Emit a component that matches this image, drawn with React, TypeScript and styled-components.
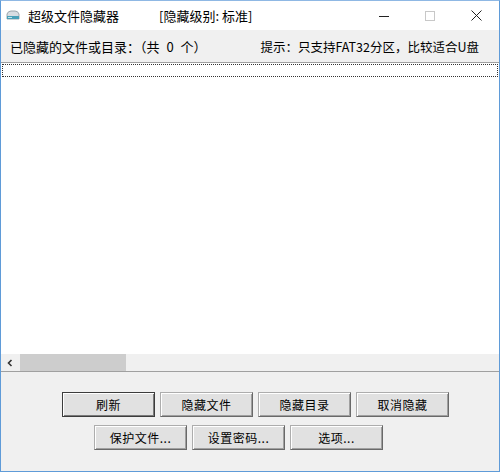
import styled, { createGlobalStyle } from 'styled-components';

const GlobalStyles = createGlobalStyle`
  * {
    box-sizing: border-box;
    margin: 0;
    padding: 0;
  }

  body {
    font-family: 'Noto Sans CJK SC', 'Noto Sans', sans-serif;
    font-size: 12px;
    color: #000;
    background: #fff;
  }
`;

const Window = styled.div`
  width: 500px;
  height: 472px;
  display: flex;
  flex-direction: column;
  border: 1px solid #5f9bd8;
  border-top-color: #8fb8e4;
  background: #f0f0f0;
  overflow: hidden;
`;

const TitleBar = styled.div`
  height: 29px;
  display: flex;
  align-items: center;
  background: #fff;
  padding-left: 4px;
`;

const AppIcon = styled.svg`
  width: 16px;
  height: 16px;
  margin-right: 7px;
`;

const Title = styled.span`
  font-size: 13px;
  width: 131px;
`;

const Level = styled.span`
  font-size: 13px;
  flex: 1;
  white-space: pre;
`;

const Control = styled.div`
  width: 46px;
  height: 29px;
  display: flex;
  align-items: center;
  justify-content: center;
`;

const InfoRow = styled.div`
  height: 32px;
  display: flex;
  align-items: center;
  justify-content: space-between;
  padding: 0 20px 0 9px;
  white-space: pre;
`;

const InfoText = styled.span<{ $size: number; $wordGap?: number }>`
  font-size: ${p => p.$size}px;
  word-spacing: ${p => p.$wordGap ?? 0}px;
`;

const ListBox = styled.div`
  flex: 1;
  display: flex;
  flex-direction: column;
  background: #fff;
  border-top: 1px solid #a0a0a0;
  border-bottom: 1px solid #a0a0a0;
`;

const FocusRow = styled.div`
  height: 13px;
  margin: 1px 1px 0 1px;
  border: 1px dotted #333;
`;

const ListBody = styled.div`
  flex: 1;
`;

const HScroll = styled.div`
  height: 17px;
  display: flex;
  align-items: center;
  background: #f0f0f0;
  padding-left: 5px;
`;

const Arrow = styled.svg`
  width: 8px;
  height: 8px;
  margin-right: 6px;
`;

const Thumb = styled.div`
  width: 106px;
  height: 17px;
  background: #cdcdcd;
`;

const ButtonArea = styled.div`
  flex: 0 0 99px;
  display: flex;
  flex-direction: column;
  align-items: flex-start;
  padding-top: 20px;
  gap: 8px;
`;

const ButtonRow = styled.div<{ $offset: number }>`
  display: flex;
  gap: 5px;
  padding-left: ${p => p.$offset}px;
`;

const Button = styled.button<{ $default?: boolean }>`
  width: 93px;
  height: 25px;
  font-family: 'Noto Sans CJK SC', 'Noto Sans', sans-serif;
  font-size: 12px;
  color: #000;
  background: #e1e1e1;
  border: 1px solid ${p => (p.$default ? '#3c3c3c' : '#adadad')};
  box-shadow: ${p =>
    p.$default
      ? 'inset 1px 1px 0 #fff, inset -1px -1px 0 #7a7a7a'
      : 'inset 1px 1px 0 #fff, inset -1px -1px 0 #a0a0a0'};
  border-right-color: ${p => (p.$default ? '#3c3c3c' : '#696969')};
  border-bottom-color: ${p => (p.$default ? '#3c3c3c' : '#696969')};
  letter-spacing: 0.5px;
`;

export default function App() {
  return (
    <>
      <GlobalStyles />
      <Window>
        <TitleBar>
          <AppIcon viewBox="0 0 16 16">
            <path d="M2 6 Q3 3 6 3 H10 Q13 3 14 6 V11 H2 Z" fill="#d8dde2" stroke="#8a949c" strokeWidth="0.8" />
            <rect x="2" y="8" width="12" height="3" fill="#4aa0b8" />
            <rect x="3" y="9" width="4" height="1" fill="#bfe6ee" />
          </AppIcon>
          <Title>超级文件隐藏器</Title>
          <Level>[隐藏级别: 标准]</Level>
          <Control>
            <svg width="10" height="10" viewBox="0 0 10 10">
              <line x1="0" y1="5.5" x2="10" y2="5.5" stroke="#222" strokeWidth="1" />
            </svg>
          </Control>
          <Control>
            <svg width="10" height="10" viewBox="0 0 10 10">
              <rect x="0.5" y="0.5" width="9" height="9" fill="none" stroke="#c8c8c8" strokeWidth="1" />
            </svg>
          </Control>
          <Control>
            <svg width="11" height="11" viewBox="0 0 11 11">
              <path d="M0.5 0.5 L10.5 10.5 M10.5 0.5 L0.5 10.5" stroke="#222" strokeWidth="1" />
            </svg>
          </Control>
        </TitleBar>
        <InfoRow>
          <InfoText $size={13} $wordGap={4}>已隐藏的文件或目录：（共 0 个）</InfoText>
          <InfoText $size={12.5}>提示：只支持FAT32分区，比较适合U盘</InfoText>
        </InfoRow>
        <ListBox>
          <FocusRow />
          <ListBody />
          <HScroll>
            <Arrow viewBox="0 0 8 8">
              <path d="M5.5 1 L2.5 4 L5.5 7" fill="none" stroke="#333" strokeWidth="1.6" />
            </Arrow>
            <Thumb />
          </HScroll>
        </ListBox>
        <ButtonArea>
          <ButtonRow $offset={61}>
            <Button $default>刷新</Button>
            <Button>隐藏文件</Button>
            <Button>隐藏目录</Button>
            <Button>取消隐藏</Button>
          </ButtonRow>
          <ButtonRow $offset={93}>
            <Button>保护文件...</Button>
            <Button>设置密码...</Button>
            <Button>选项...</Button>
          </ButtonRow>
        </ButtonArea>
      </Window>
    </>
  );
}
